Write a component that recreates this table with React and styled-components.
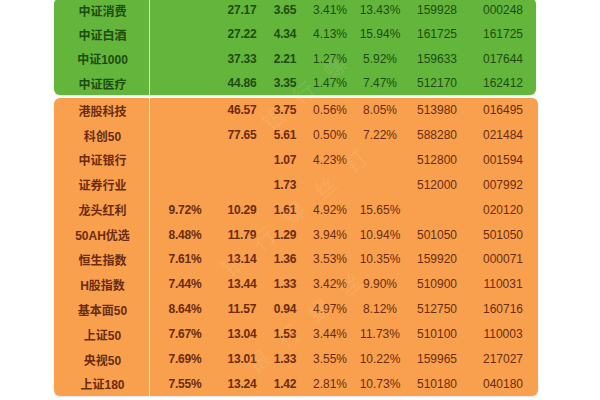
import React from "react";
import styled, {createGlobalStyle} from "styled-components";

const GlobalStyle = createGlobalStyle`
  html, body {
    margin: 0;
    padding: 0;
    background: #ffffff;
    overflow: hidden;
  }
  body {
    font-family: "Liberation Sans", "Noto Sans CJK SC", sans-serif;
  }
`;

const COLS = "96px 70px 44px 42px 48px 52px 62px 70px";

const Page = styled.div`
  position: relative;
  width: 600px;
  height: 400px;
  overflow: hidden;
  padding-left: 54px;
  box-sizing: border-box;
`;

const Panel = styled.div`
  width: ${({wide}) => (wide ? 484 : 482)}px;
  margin-top: ${({gap}) => gap}px;
  background: ${({tone}) => tone.bg};
  color: ${({tone}) => tone.fg};
  border-radius: 6px;
  box-shadow: 0 1px 2px rgba(0, 0, 0, 0.12);
`;

const Row = styled.div`
  display: grid;
  grid-template-columns: ${COLS};
  height: ${({h}) => h}px;
  align-items: stretch;
`;

const Cell = styled.div`
  display: flex;
  align-items: center;
  justify-content: center;
  font-size: 12px;
  font-weight: ${({bold}) => (bold ? 700 : 400)};
  letter-spacing: ${({bold}) => (bold ? "-0.2px" : "0")};
  white-space: nowrap;
`;

const NameCell = styled(Cell)`
  font-weight: 700;
  font-size: 12px;
  padding-left: 2px;
  border-right: 1px solid ${({line}) => line};
`;

const Watermark = styled.div`
  position: absolute;
  left: ${({x}) => x}px;
  top: ${({y}) => y}px;
  transform: rotate(-40deg);
  font-family: "Noto Sans CJK SC", sans-serif;
  font-size: 22px;
  letter-spacing: 18px;
  color: rgba(255, 232, 210, 0.13);
  pointer-events: none;
  white-space: nowrap;
`;

const green = {bg: "#63b53c", fg: "#1d4d10", line: "rgba(235,250,225,0.85)"};
const orange = {bg: "#f8a04d", fg: "#6b2c12", line: "rgba(255,240,225,0.85)"};

const greenRows = [
  ["中证消费", "", "27.17", "3.65", "3.41%", "13.43%", "159928", "000248"],
  ["中证白酒", "", "27.22", "4.34", "4.13%", "15.94%", "161725", "161725"],
  ["中证1000", "", "37.33", "2.21", "1.27%", "5.92%", "159633", "017644"],
  ["中证医疗", "", "44.86", "3.35", "1.47%", "7.47%", "512170", "162412"],
];

const orangeRows = [
  ["港股科技", "", "46.57", "3.75", "0.56%", "8.05%", "513980", "016495"],
  ["科创50", "", "77.65", "5.61", "0.50%", "7.22%", "588280", "021484"],
  ["中证银行", "", "", "1.07", "4.23%", "", "512800", "001594"],
  ["证券行业", "", "", "1.73", "", "", "512000", "007992"],
  ["龙头红利", "9.72%", "10.29", "1.61", "4.92%", "15.65%", "", "020120"],
  ["50AH优选", "8.48%", "11.79", "1.29", "3.94%", "10.94%", "501050", "501050"],
  ["恒生指数", "7.61%", "13.14", "1.36", "3.53%", "10.35%", "159920", "000071"],
  ["H股指数", "7.44%", "13.44", "1.33", "3.42%", "9.90%", "510900", "110031"],
  ["基本面50", "8.64%", "11.57", "0.94", "4.97%", "8.12%", "512750", "160716"],
  ["上证50", "7.67%", "13.04", "1.53", "3.44%", "11.73%", "510100", "110003"],
  ["央视50", "7.69%", "13.01", "1.33", "3.55%", "10.22%", "159965", "217027"],
  ["上证180", "7.55%", "13.24", "1.42", "2.81%", "10.73%", "510180", "040180"],
];

function Table({rows, tone, h}) {
  return rows.map(([name, ...vals]) => (
    <Row key={name} h={h}>
      <NameCell line={tone.line}>{name}</NameCell>
      {vals.map((v, i) => (
        <Cell key={i} bold={i < 3}>
          {v}
        </Cell>
      ))}
    </Row>
  ));
}

export default function App() {
  return (
    <>
      <GlobalStyle />
      <Page>
        <Panel tone={green} gap={-2}>
          <Table rows={greenRows} tone={green} h={24.3} />
        </Panel>
        <Panel tone={orange} gap={2.5} wide>
          <Table rows={orangeRows} tone={orange} h={24.9} />
        </Panel>
        <Watermark x={250} y={70}>银行螺</Watermark>
        <Watermark x={200} y={190}>银行螺丝钉</Watermark>
        <Watermark x={230} y={300}>银行螺丝</Watermark>
      </Page>
    </>
  );
}
